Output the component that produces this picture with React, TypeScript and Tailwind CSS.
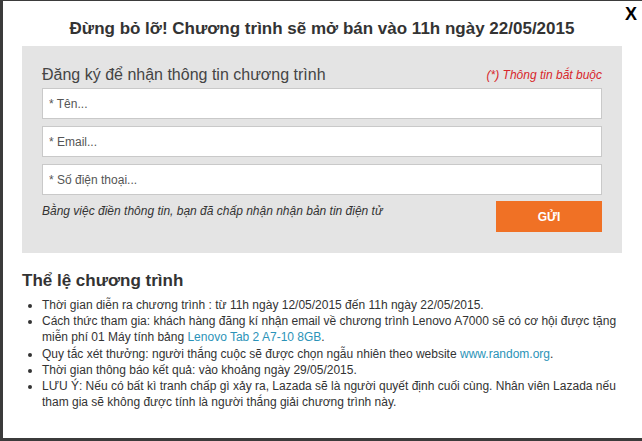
import React from 'react'

const rules: React.ReactNode[] = [
  'Thời gian diễn ra chương trình : từ 11h ngày 12/05/2015 đến 11h ngày 22/05/2015.',
  <>
    Cách thức tham gia: khách hàng đăng kí nhận email về chương trình Lenovo A7000 sẽ có cơ hội được tặng miễn phí 01 Máy
    tính bảng <a className="text-[#2b93b8]">Lenovo Tab 2 A7-10 8GB</a>.
  </>,
  <>
    Quy tắc xét thưởng: người thắng cuộc sẽ được chọn ngẫu nhiên theo website{' '}
    <a className="text-[#2b93b8]">www.random.org</a>.
  </>,
  'Thời gian thông báo kết quả: vào khoảng ngày 29/05/2015.',
  'LƯU Ý: Nếu có bất kì tranh chấp gì xảy ra, Lazada sẽ là người quyết định cuối cùng. Nhân viên Lazada nếu tham gia sẽ không được tính là người thắng giải chương trình này.',
]

const fields = ['* Tên...', '* Email...', '* Số điện thoại...']

export default function App() {
  return (
    <div className="w-[642px] h-[441px] bg-[#3b3b3b] overflow-hidden pt-px" style={{ fontFamily: '"Liberation Sans", Arial, sans-serif' }}>
      <div className="relative ml-[3px] h-[437px] bg-white pl-[19px] pr-[20px] pt-[18px]">
        <button className="absolute top-[3px] right-[5px] text-[18px] font-bold text-black leading-5">X</button>

        <h1 className="text-center text-[17px] font-bold leading-5 text-[#333]">
          Đừng bỏ lỡ! Chương trình sẽ mở bán vào 11h ngày 22/05/2015
        </h1>

        <div className="mt-[7px] bg-[#e4e4e4] px-5 pt-[19px] pb-[21px]">
          <div className="flex items-end justify-between">
            <h2 className="text-[16px] leading-5 text-[#444]">Đăng ký để nhận thông tin chương trình</h2>
            <span className="text-[12px] italic leading-5 text-[#d8262b]">(*) Thông tin bắt buộc</span>
          </div>
          <div className="mt-[3px] flex flex-col gap-[7px]">
            {fields.map(f => (
              <input
                key={f}
                placeholder={f}
                className="h-[31px] w-full border border-[#c9c9c9] bg-white px-[6px] text-[12px] text-[#444] placeholder:text-[#555] outline-none"
              />
            ))}
          </div>
          <div className="mt-[6px] flex items-start justify-between">
            <p className="mt-[2px] text-[12px] italic leading-4 text-[#333]">
              Bằng việc điền thông tin, bạn đã chấp nhận nhận bản tin điện tử
            </p>
            <button className="h-[31px] w-[106px] bg-[#f07125] text-[12px] font-bold text-white">GỬI</button>
          </div>
        </div>

        <h2 className="mt-[18px] text-[17px] font-bold leading-5 text-[#333]">Thể lệ chương trình</h2>
        <ul className="mt-[6px] list-disc pl-[20px] text-[12px] leading-[16.2px] text-[#333]">
          {rules.map((r, i) => (
            <li key={i}>{r}</li>
          ))}
        </ul>
      </div>
    </div>
  )
}
